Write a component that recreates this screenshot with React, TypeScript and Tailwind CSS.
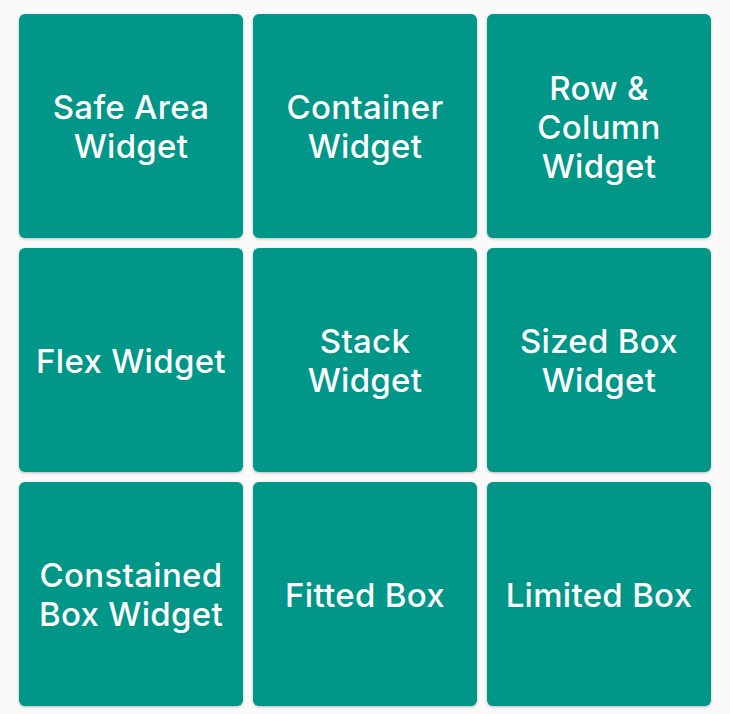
import React from "react";

const items = [
  "Safe Area Widget",
  "Container Widget",
  "Row & Column Widget",
  "Flex Widget",
  "Stack Widget",
  "Sized Box Widget",
  "Constained Box Widget",
  "Fitted Box",
  "Limited Box",
];

const lines: Record<string, string[]> = {
  "Safe Area Widget": ["Safe Area", "Widget"],
  "Container Widget": ["Container", "Widget"],
  "Row & Column Widget": ["Row &", "Column", "Widget"],
  "Flex Widget": ["Flex Widget"],
  "Stack Widget": ["Stack", "Widget"],
  "Sized Box Widget": ["Sized Box", "Widget"],
  "Constained Box Widget": ["Constained", "Box Widget"],
  "Fitted Box": ["Fitted Box"],
  "Limited Box": ["Limited Box"],
};

export default function App() {
  return (
    <div className="w-[730px] h-[714px] bg-[#fafafa] overflow-hidden" style={{ fontFamily: "Inter, Roboto, 'Noto Sans', sans-serif" }}>
      <div className="grid grid-cols-[224px_224px_224px] grid-rows-[224px_224px_224px] gap-[10px] pl-[19px] pt-[14px]">
        {items.map((t) => (
          <div
            key={t}
            className="bg-[#009688] rounded-[6px] shadow-[0_1px_3px_rgba(0,0,0,0.25)] flex flex-col items-center justify-center pt-[2px] text-white text-[33px] leading-[39px] tracking-[0.3px] font-medium text-center"
          >
            {lines[t].map((l) => (
              <span key={l}>{l}</span>
            ))}
          </div>
        ))}
      </div>
    </div>
  );
}
